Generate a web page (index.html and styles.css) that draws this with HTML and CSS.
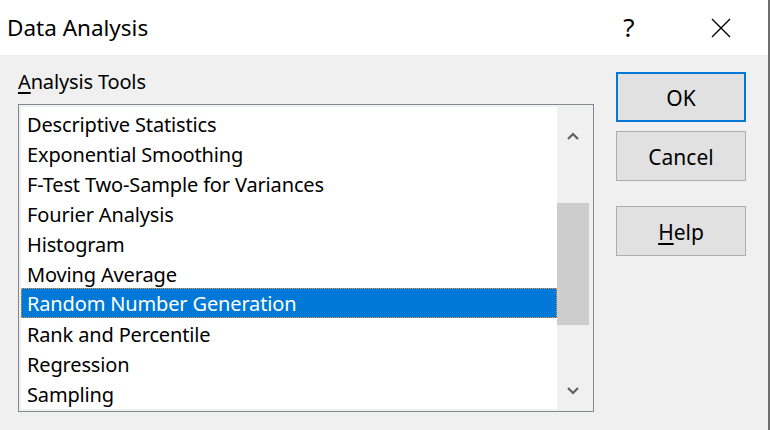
FILE: index.html
```html
<!DOCTYPE html>
<html>
<head>
<meta charset="utf-8">
<link rel="stylesheet" href="styles.css">
</head>
<body>
<div class="screen">
  <div class="dialog">
    <div class="titlebar">
      <div class="title">Data Analysis</div>
      <div class="title-help">?</div>
      <div class="title-close">
        <svg width="20" height="20" viewBox="0 0 20 20"><path d="M1 1 L19 19 M19 1 L1 19" stroke="#000" stroke-width="1.4" fill="none"/></svg>
      </div>
    </div>
    <div class="body">
      <div class="left">
        <div class="label"><u>A</u>nalysis Tools</div>
        <div class="listbox">
          <ul class="items">
            <li>Descriptive Statistics</li>
            <li>Exponential Smoothing</li>
            <li>F-Test Two-Sample for Variances</li>
            <li>Fourier Analysis</li>
            <li>Histogram</li>
            <li>Moving Average</li>
            <li class="selected">Random Number Generation</li>
            <li>Rank and Percentile</li>
            <li>Regression</li>
            <li>Sampling</li>
          </ul>
          <div class="scrollbar">
            <div class="sb-up"><svg width="12" height="8" viewBox="0 0 12 8"><polyline points="1,7 6,2 11,7" fill="none" stroke="#606060" stroke-width="2.2"/></svg></div>
            <div class="sb-track"><div class="sb-thumb"></div></div>
            <div class="sb-down"><svg width="12" height="8" viewBox="0 0 12 8"><polyline points="1,1 6,6 11,1" fill="none" stroke="#606060" stroke-width="2.2"/></svg></div>
          </div>
        </div>
      </div>
      <div class="buttons">
        <div class="btn btn-default">OK</div>
        <div class="btn btn-cancel">Cancel</div>
        <div class="btn btn-help"><u>H</u>elp</div>
      </div>
    </div>
  </div>
  <div class="edge"></div>
</div>
</body>
</html>
```
FILE: styles.css
```css
html, body {
  margin: 0;
  padding: 0;
  width: 770px;
  height: 430px;
  overflow: hidden;
  font-family: "Noto Sans", "Open Sans", sans-serif;
  color: #000;
}
.screen {
  display: flex;
  width: 770px;
  height: 430px;
}
.dialog {
  width: 768px;
  height: 430px;
  display: flex;
  flex-direction: column;
  background: #f0f0f0;
}
.edge {
  width: 2px;
  height: 430px;
  background: #6e6e6e;
}
.titlebar {
  height: 55px;
  background: #fff;
  display: flex;
  align-items: center;
}
.title {
  font-size: 22.5px;
  margin-left: 7px;
  flex: 1;
  padding-bottom: 1px;
}
.title-help {
  font-size: 26px;
  width: 20px;
  text-align: center;
  margin-right: 72px;
  padding-bottom: 2px;
}
.title-close {
  width: 20px;
  height: 20px;
  margin-right: 37px;
  margin-top: 1px;
}
.title-close svg { display: block; }
.body {
  flex: 1;
  display: flex;
  padding: 0 22px 0 18px;
  gap: 22px;
}
.left {
  width: 576px;
  display: flex;
  flex-direction: column;
}
.label {
  font-size: 20px;
  letter-spacing: -0.15px;
  height: 49px;
  box-sizing: border-box;
  padding-top: 4px;
  line-height: 45px;
}
.label u, .btn u {
  text-decoration-thickness: 1.5px;
  text-underline-offset: 3px;
}
.listbox {
  height: 308px;
  box-sizing: border-box;
  border: 1px solid #828790;
  padding: 2px;
  display: flex;
  background: #f0f0f0;
}
.items {
  list-style: none;
  margin: 0;
  padding: 1px 0;
  width: 536px;
  background: #fff;
}
.items li {
  height: 30px;
  padding-top: 3px;
  line-height: 27px;
  font-size: 20px;
  letter-spacing: -0.15px;
  padding-left: 6px;
  box-sizing: border-box;
  white-space: nowrap;
}
.items li.selected {
  background: #0078d7;
  color: #fff;
  border: 1px dotted #f89a3a;
  padding-left: 5px;
  padding-top: 2px;
  line-height: 26px;
}
.scrollbar {
  width: 34px;
  display: flex;
  flex-direction: column;
}
.sb-up {
  height: 57px;
  display: flex;
  align-items: center;
  justify-content: center;
  padding-right: 2px;
  box-sizing: border-box;
}
.sb-track {
  flex: 1;
}
.sb-thumb {
  width: 32px;
  height: 122px;
  margin-top: 39px;
  background: #cdcdcd;
}
.sb-down {
  height: 36px;
  display: flex;
  align-items: center;
  justify-content: center;
  padding-right: 2px;
  box-sizing: border-box;
}
.scrollbar svg { display: block; }
.buttons {
  width: 130px;
  display: flex;
  flex-direction: column;
  padding-top: 17px;
}
.btn {
  height: 50px;
  box-sizing: border-box;
  background: #e1e1e1;
  border: 1px solid #adadad;
  font-size: 21px;
  display: flex;
  align-items: center;
  justify-content: center;
  padding-top: 1px;
}
.btn-default {
  border: 2px solid #0078d7;
}
.btn-cancel {
  margin-top: 9px;
}
.btn-help {
  margin-top: 25px;
}
```
